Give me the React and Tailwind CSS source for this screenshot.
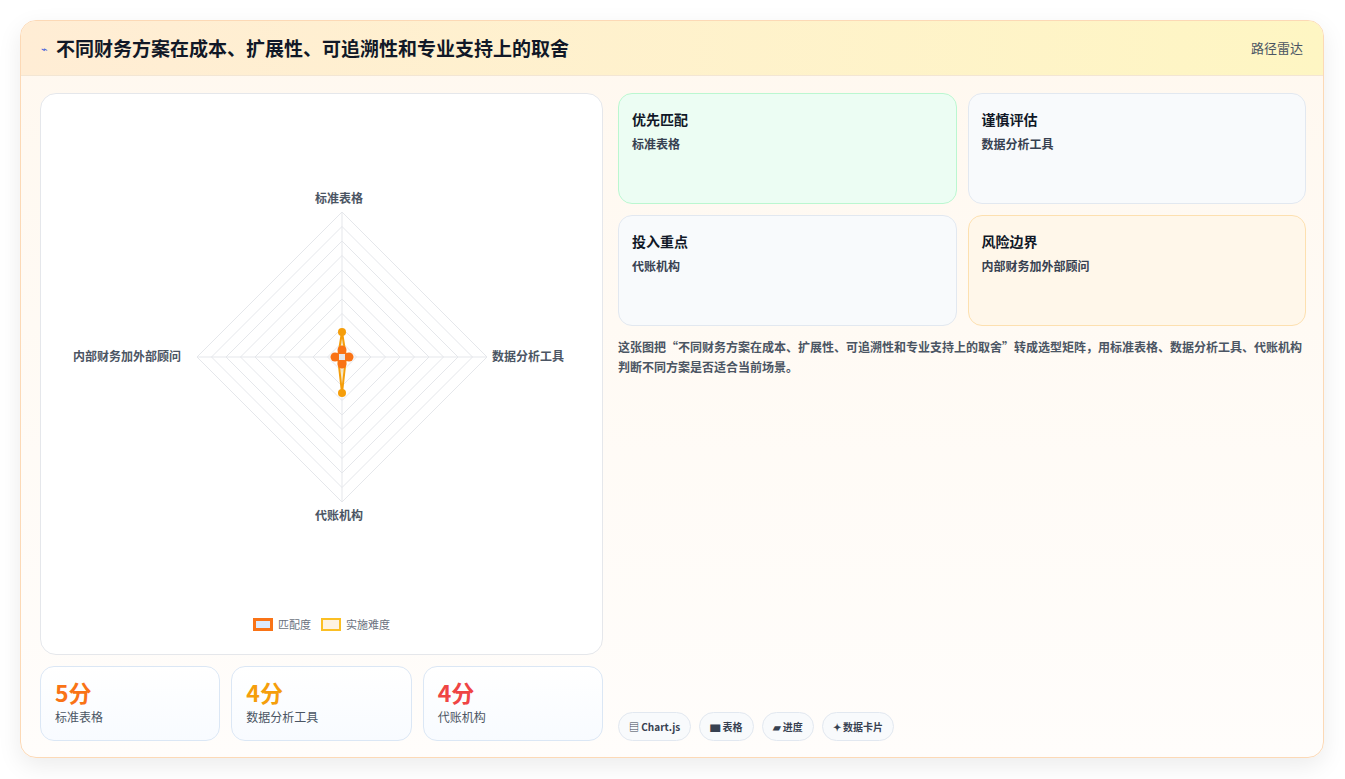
import React from "react";

const C = 341, Rr = 145;
function Radar() {
  const rings = Array.from({ length: 10 }, (_, i) => (i + 1) / 10 * Rr);
  const pt = (v, max = Rr) => v;
  const poly = (t, r, b, l) => `${C},${156 - t} ${C + r},156 ${C},${156 + b} ${C - l},156`;
  return (
    <svg width="562" height="561" className="absolute left-0 top-0">
      <g transform="translate(-40,-93)">
        {rings.map((r, i) => (
          <polygon key={i} points={`${C},${356 - r} ${C + r},356 ${C},${356 + r} ${C - r},356`} fill="none" stroke="#e5e7eb" strokeWidth="1" />
        ))}
        <line x1={C} y1={356 - Rr} x2={C} y2={356 + Rr} stroke="#e5e7eb" />
        <line x1={C - Rr} y1={356} x2={C + Rr} y2={356} stroke="#e5e7eb" />
        <polygon points={`${C},331 ${C + 4},356 ${C},392 ${C - 4},356`} fill="rgba(251,191,36,0.2)" stroke="#f59e0b" strokeWidth="2" />
        {[[C, 331], [C, 392]].map(([x, y], i) => <circle key={i} cx={x} cy={y} r="4" fill="#f59e0b" />)}
        <polygon points={`${C},349 ${C + 7},356 ${C},363 ${C - 7},356`} fill="rgba(219,234,254,0.6)" stroke="#f97316" strokeWidth="2" />
        {[[C, 349], [C + 7, 356], [C, 363], [C - 7, 356]].map(([x, y], i) => <circle key={i} cx={x} cy={y} r="4.5" fill="#f97316" />)}
        <rect x={C - 3} y={353} width="6" height="6" fill="#e5e7eb" />
      </g>
    </svg>
  );
}

const font = { fontFamily: '"Noto Sans CJK SC","Noto Sans",sans-serif' };

export default function App() {
  return (
    <div className="w-[1345px] h-[779px] bg-white pt-[20px] px-[20px]" style={font}>
      <div className="w-[1304px] h-[738px] rounded-[16px] border border-[#fcd9b6] shadow-[0_8px_24px_rgba(0,0,0,0.08)] overflow-hidden flex flex-col bg-gradient-to-b from-[#fff8ef] to-[#fffdfb]">
        <div className="h-[55px] shrink-0 flex items-center justify-between px-[20px] bg-gradient-to-r from-[#ffedd5] to-[#fef6c3] border-b border-[#f3e6d4]">
          <div className="flex items-center gap-[8px]">
            <span className="text-[#3b5bdb] text-[11px]">⌁</span>
            <span className="text-[19px] font-bold text-[#111827]">不同财务方案在成本、扩展性、可追溯性和专业支持上的取舍</span>
          </div>
          <span className="text-[13px] text-[#4b5563]">路径雷达</span>
        </div>
        <div className="flex-1 flex gap-[15px] pl-[19px] pr-[17px] pt-[17px] pb-[18px]">
          <div className="w-[563px] flex flex-col gap-[11px]">
            <div className="relative h-[562px] rounded-[16px] border border-[#e5e7eb] bg-white">
              <Radar />
              <span className="absolute left-[274px] top-[95px] text-[12px] font-bold text-[#4b5563]">标准表格</span>
              <span className="absolute left-[274px] top-[412px] text-[12px] font-bold text-[#4b5563]">代账机构</span>
              <span className="absolute left-[32px] top-[253px] text-[12px] font-bold text-[#4b5563]">内部财务加外部顾问</span>
              <span className="absolute left-[451px] top-[253px] text-[12px] font-bold text-[#4b5563]">数据分析工具</span>
              <div className="absolute left-0 right-0 top-[522px] flex justify-center gap-[10px] text-[11px] text-[#6b7280]">
                <span className="flex items-center gap-[5px]"><span className="w-[20px] h-[13px] border-[3px] border-[#f97316] bg-[#dbeafe]" />匹配度</span>
                <span className="flex items-center gap-[5px]"><span className="w-[20px] h-[13px] border-[2px] border-[#fbbf24] bg-[#fef3e2]" />实施难度</span>
              </div>
            </div>
            <div className="flex gap-[11px]">
              {[["5分", "text-[#f97316]", "标准表格"], ["4分", "text-[#f59e0b]", "数据分析工具"], ["4分", "text-[#ef4444]", "代账机构"]].map(([v, c, l], i) => (
                <div key={i} className="flex-1 h-[75px] rounded-[14px] border border-[#dbe7f5] bg-gradient-to-b from-white to-[#f8fbff] px-[14px] pt-[9px]">
                  <div className={`text-[23px] font-bold leading-[32px] ${c}`}>{v}</div>
                  <div className="text-[12px] text-[#4b5563] leading-[18px]">{l}</div>
                </div>
              ))}
            </div>
          </div>
          <div className="flex-1 flex flex-col">
            <div className="grid grid-cols-2 gap-[11px]">
              {[["优先匹配", "标准表格", "bg-[#ecfdf3] border-[#bbf7d0] h-[111px]"], ["谨慎评估", "数据分析工具", "bg-[#f8fafc] border-[#e2e8f0] h-[111px]"], ["投入重点", "代账机构", "bg-[#f8fafc] border-[#e2e8f0] h-[111px]"], ["风险边界", "内部财务加外部顾问", "bg-[#fff7ea] border-[#fde0b0] h-[111px]"]].map(([t, s, c], i) => (
                <div key={i} className={`rounded-[14px] border ${c} px-[13px] pt-[15px]`}>
                  <div className="text-[14px] font-bold text-[#111827] leading-[20px]">{t}</div>
                  <div className="text-[12px] font-semibold text-[#374151] mt-[6px]">{s}</div>
                </div>
              ))}
            </div>
            <p className="mt-[11px] text-[12px] leading-[20px] font-semibold text-[#4b5563]">这张图把“不同财务方案在成本、扩展性、可追溯性和专业支持上的取舍”转成选型矩阵，用标准表格、数据分析工具、代账机构判断不同方案是否适合当前场景。</p>
            <div className="mt-auto flex gap-[8px]">
              {["▤ Chart.js", "▆ 表格", "▰ 进度", "✦ 数据卡片"].map((t, i) => (
                <span key={i} className="h-[29px] px-[10px] flex items-center rounded-full border border-[#e2e8f0] bg-[#f8fafc] text-[10px] font-bold text-[#374151]">{t}</span>
              ))}
            </div>
          </div>
        </div>
      </div>
    </div>
  );
}
